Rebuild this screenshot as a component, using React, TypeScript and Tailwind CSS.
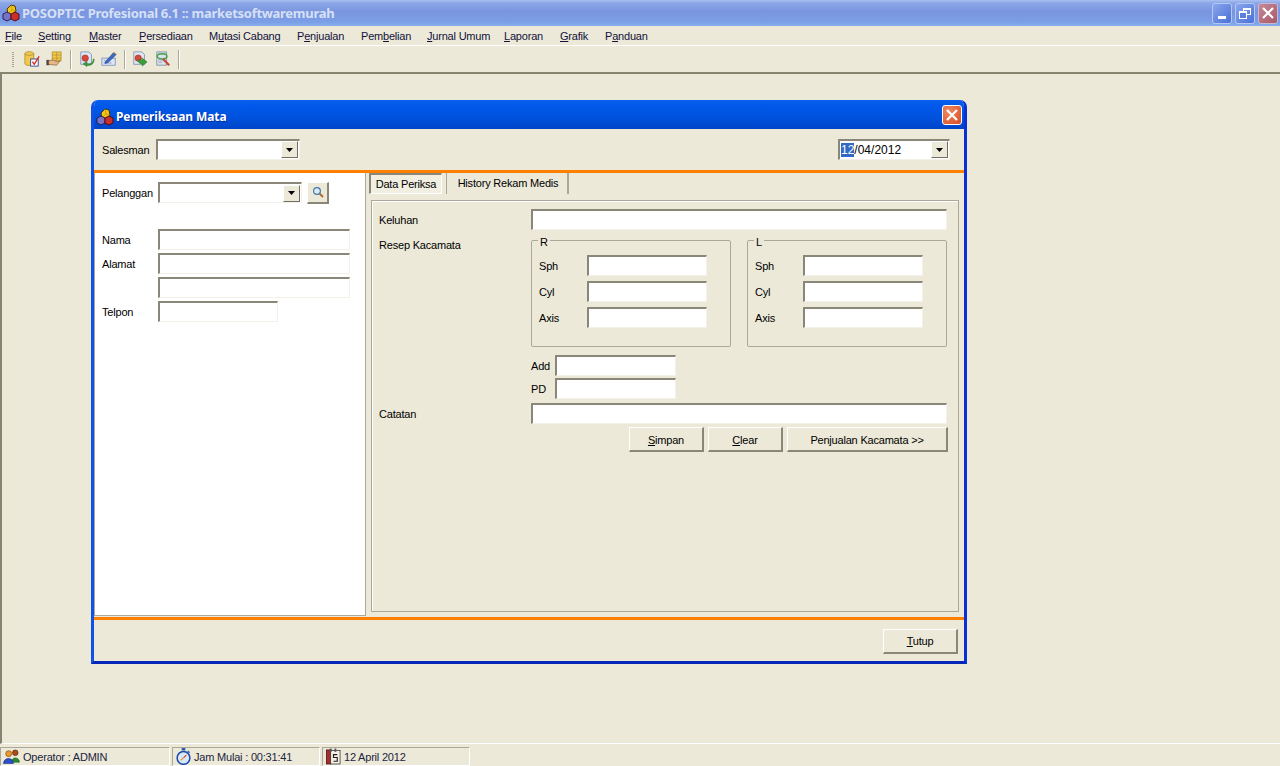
import type { ReactNode } from 'react'

const sunken = 'border-t-2 border-l-2 border-r border-b border-t-[#8a8778] border-l-[#8a8778] border-r-[#f4f2e8] border-b-[#f4f2e8] bg-white'

const menus: [string, string, string, string][] = [
    ['', 'F', 'ile', 'w-[33px]'],
    ['', 'S', 'etting', 'w-[51px]'],
    ['', 'M', 'aster', 'w-[50px]'],
    ['', 'P', 'ersediaan', 'w-[70px]'],
    ['M', 'u', 'tasi Cabang', 'w-[88px]'],
    ['P', 'e', 'njualan', 'w-[64px]'],
    ['Pem', 'b', 'elian', 'w-[66px]'],
    ['', 'J', 'urnal Umum', 'w-[77px]'],
    ['', 'L', 'aporan', 'w-[56px]'],
    ['', 'G', 'rafik', 'w-[45px]'],
    ['P', 'a', 'nduan', 'w-[50px]'],
]

const Logo = () => (
    <svg width="18" height="18" viewBox="0 0 18 18">
        <path d="M5 5 L9 1 L13 2 L14 7 L10 11 L6 10 Z" fill="#f5c518" stroke="#3c2c00" strokeWidth="0.9" />
        <path d="M9 1 L10 6 L14 7 M10 6 L6 10" fill="none" stroke="#b08a10" strokeWidth="0.6" />
        <path d="M1 10 L5 8 L9 10 L9 15 L5 17 L1 15 Z" fill="#7a72c4" stroke="#1c1850" strokeWidth="0.9" />
        <path d="M9 10 L13 8 L17 10 L17 15 L13 17 L9 15 Z" fill="#c8302c" stroke="#4c0808" strokeWidth="0.9" />
    </svg>
)

const Db = () => (
    <svg width="16" height="16" viewBox="0 0 18 18">
        <path d="M1 3 C1 0 11 0 11 3 L11 14 C11 17 1 17 1 14 Z" fill="#f0c850" stroke="#a88420" strokeWidth="0.8" />
        <path d="M1 3 C1 5.5 11 5.5 11 3" fill="none" stroke="#a88420" strokeWidth="0.8" />
        <rect x="7.5" y="9" width="8.5" height="8" fill="#fff" stroke="#30408c" />
        <path d="M9.5 12 L11.5 15 L17 6" fill="none" stroke="#d02828" strokeWidth="1.5" />
    </svg>
)

const DbHand = () => (
    <svg width="16" height="16" viewBox="0 0 18 18">
        <path d="M7 1 H17 V11 H7 Z" fill="#f0c850" stroke="#b08a20" strokeWidth="0.8" />
        <path d="M7 4.5 H17 M7 8 H17 M12 1 V11" stroke="#b08a20" strokeWidth="0.7" />
        <rect x="0.5" y="10" width="3" height="6" fill="#444" />
        <path d="M3 11 L8 10 L12 12 L16 11 L12 16 L3 15 Z" fill="#e8b888" stroke="#80502c" strokeWidth="0.7" />
    </svg>
)

const DocArrow = ({ dir }: { dir: 'left' | 'right' }) => (
    <svg width="16" height="16" viewBox="0 0 18 18">
        <path d="M2 1 H11 L14 4 V15 H2 Z" fill="#dfe6f4" stroke="#6c7fa8" strokeWidth="0.8" />
        <circle cx="7" cy="8" r="3.6" fill="#d84838" stroke="#902818" strokeWidth="0.6" />
        {dir === 'left'
            ? <path d="M16 9 C16 14 12 15 9 14 L9 11.5 L4.5 14.5 L9 17.5 L9 16 C13 17 17 15 17 9 Z" fill="#3c9c3c" stroke="#1c6c1c" strokeWidth="0.5" />
            : <path d="M6 10 C9 10 11 10 11.5 10.5 L11.5 8 L17 12.5 L11.5 17 L11.5 14.5 C9 14.5 7 13 6 10 Z" fill="#3c9c3c" stroke="#1c6c1c" strokeWidth="0.5" />}
    </svg>
)

const Pencil = () => (
    <svg width="16" height="16" viewBox="0 0 18 18">
        <rect x="1" y="8" width="15" height="8" fill="#dce6f6" stroke="#6c7fa8" strokeWidth="0.8" />
        <path d="M3 11 H8 M3 13.5 H12" stroke="#7c90c0" strokeWidth="0.8" />
        <path d="M5 12 L14 2 L17 4 L8 13 L4.5 14 Z" fill="#3c6cc8" stroke="#1c3c80" strokeWidth="0.7" />
        <path d="M14 2 L15 1 L17.5 3 L17 4 Z" fill="#e0a030" />
    </svg>
)

const DocTool = () => (
    <svg width="16" height="16" viewBox="0 0 18 18">
        <path d="M2 1 H13 V16 H2 Z" fill="#d8e0ec" stroke="#6c7f98" strokeWidth="0.8" />
        <ellipse cx="8" cy="6" rx="5.5" ry="3" fill="none" stroke="#48a048" strokeWidth="1.6" />
        <path d="M4 10 H10 M4 12.5 H8" stroke="#8090a8" strokeWidth="0.8" />
        <path d="M9 9 L16 16" stroke="#c84838" strokeWidth="2.4" />
    </svg>
)

const People = () => (
    <svg width="17" height="15" viewBox="0 0 18 16">
        <circle cx="13" cy="4" r="3" fill="#b04818" stroke="#402000" strokeWidth="0.6" />
        <path d="M9 14 C9 8 17 8 17.5 14 Z" fill="#2c8c2c" stroke="#145014" strokeWidth="0.6" />
        <circle cx="6" cy="5" r="3.2" fill="#e89830" stroke="#704008" strokeWidth="0.6" />
        <path d="M0.5 15.5 C0.5 8.5 11 8.5 11 15.5 Z" fill="#2c50c8" stroke="#142878" strokeWidth="0.6" />
    </svg>
)

const Stopwatch = () => (
    <svg width="15" height="17" viewBox="0 0 16 18">
        <rect x="6" y="0" width="4" height="2.5" fill="#2858b0" />
        <path d="M12.5 3 L14.5 5" stroke="#2858b0" strokeWidth="1.4" />
        <circle cx="8" cy="10.5" r="6.8" fill="#d8e8f8" stroke="#1c48a8" strokeWidth="1.6" />
        <path d="M8 10.5 L11 7.5" stroke="#d04020" strokeWidth="1.2" />
        <path d="M8 10.5 L5 13" stroke="#e89020" strokeWidth="1.2" />
    </svg>
)

const Calendar = () => (
    <svg width="15" height="17" viewBox="0 0 16 18">
        <rect x="0.5" y="2" width="5" height="15" fill="#a82c2c" stroke="#401010" strokeWidth="0.8" />
        <rect x="5" y="2.5" width="10" height="14.5" fill="#f4f0e4" stroke="#303030" strokeWidth="0.8" />
        <rect x="4" y="0.5" width="2" height="3.5" fill="#555" />
        <rect x="9" y="0.5" width="2" height="3.5" fill="#555" />
        <path d="M12 7 H8 V10 H12 V14 H8" fill="none" stroke="#202020" strokeWidth="1.2" />
    </svg>
)

const Arrow = () => (
    <svg width="7" height="4" viewBox="0 0 7 4"><path d="M0 0 H7 L3.5 4 Z" fill="#000" /></svg>
)

const Field = ({ className, children }: { className: string; children?: ReactNode }) => (
    <div className={`h-[21px] shrink-0 ${sunken} ${className}`}>{children}</div>
)

const Combo = ({ className, children }: { className: string; children?: ReactNode }) => (
    <div className={`h-[21px] shrink-0 flex items-center justify-between ${sunken} ${className}`}>
        <span className="pl-px leading-none">{children}</span>
        <div className="w-[17px] h-[17px] mr-px flex items-center justify-center bg-[#ece9d8] border border-t-white border-l-white border-r-[#716f64] border-b-[#716f64]">
            <Arrow />
        </div>
    </div>
)

const Button = ({ className, children }: { className: string; children: ReactNode }) => (
    <div className={`h-[25px] shrink-0 flex items-center justify-center pt-[2px] bg-[#ece9d8] border-t border-l border-r-2 border-b-2 border-t-white border-l-white border-r-[#8a8778] border-b-[#8a8778] ${className}`}>
        {children}
    </div>
)

const Sep = ({ className }: { className: string }) => (
    <div className={`w-px h-[19px] bg-[#aca899] shadow-[1px_0_0_#fff] ${className}`} />
)

const LensRow = ({ label }: { label: string }) => (
    <div className="flex items-center h-[21px]">
        <span className="w-[48px] pt-[2px]">{label}</span>
        <Field className="w-[120px]" />
    </div>
)

const Lens = ({ title }: { title: string }) => (
    <div className="relative w-[200px] h-[107px] border border-[#aca899] rounded-[2px] pl-[7px] pt-[14px] flex flex-col gap-[5px]">
        <span className="absolute left-[6px] top-[-5px] px-[2px] bg-[#ece9d8] leading-[12px]">{title}</span>
        <LensRow label="Sph" />
        <LensRow label="Cyl" />
        <LensRow label="Axis" />
    </div>
)

const Panel = ({ className, icon, text }: { className: string; icon: ReactNode; text: string }) => (
    <div className={`h-[19px] flex items-center gap-[3px] border border-t-[#aca899] border-l-[#aca899] border-r-white border-b-white ${className}`}>
        {icon}
        <span className="text-[#1c2440] pt-[2px]">{text}</span>
    </div>
)

export default function App() {
    return (
        <div className="w-[1280px] h-[766px] overflow-hidden flex flex-col bg-[#ece9d8] text-black text-[11px] tracking-[-0.2px] font-['Liberation_Sans',sans-serif]">
            <div className="h-[26px] shrink-0 flex items-center justify-between pl-[2px] pr-[2px] bg-[linear-gradient(180deg,#a9c0f0_0%,#8ba6e6_12%,#7a95df_45%,#7b9fe6_85%,#88aeee_100%)]">
                <div className="flex items-center gap-[2px]">
                    <Logo />
                    <span className="pt-[2px] text-[13px] font-['Noto_Sans',sans-serif] font-bold text-[#d6e0f6] tracking-[-0.28px]">POSOPTIC Profesional 6.1 :: marketsoftwaremurah</span>
                </div>
                <div className="flex items-center gap-[3px]">
                    <div className="w-[20px] h-[21px] rounded-[3px] border border-[#b4c8f4] bg-[linear-gradient(135deg,#8aa6ec,#4a70d8)] flex items-end pl-[5px] pb-[4px]">
                        <div className="w-[8px] h-[3px] bg-white" />
                    </div>
                    <div className="relative w-[20px] h-[21px] rounded-[3px] border border-[#b4c8f4] bg-[linear-gradient(135deg,#8aa6ec,#4a70d8)]">
                        <div className="absolute left-[7px] top-[4px] w-[8px] h-[7px] border border-t-2 border-white" />
                        <div className="absolute left-[3px] top-[7px] w-[8px] h-[8px] border border-t-2 border-white bg-[#5c80de]" />
                    </div>
                    <div className="w-[20px] h-[21px] rounded-[3px] border border-[#c8b8d0] bg-[linear-gradient(135deg,#c48a98,#a85868)] flex items-center justify-center">
                        <svg width="12" height="12" viewBox="0 0 12 12"><path d="M1 1 L11 11 M11 1 L1 11" stroke="#fff" strokeWidth="2.2" /></svg>
                    </div>
                </div>
            </div>

            <div className="h-[20px] shrink-0 flex items-center pl-[5px] pt-px border-b border-white text-[#12123c]">
                {menus.map(([a, u, b, w]) => (
                    <span key={a + u + b} className={w}>{a}<u>{u}</u>{b}</span>
                ))}
            </div>

            <div className="h-[26px] shrink-0 flex items-center pl-[12px]">
                <div className="w-[2px] h-[15px] mr-[10px] bg-[repeating-linear-gradient(180deg,#a8a490_0,#a8a490_1px,transparent_1px,transparent_2px)]" />
                <div className="flex items-center gap-[6px]">
                    <Db />
                    <DbHand />
                </div>
                <Sep className="mx-[8px]" />
                <div className="flex items-center gap-[6px]">
                    <DocArrow dir="left" />
                    <Pencil />
                </div>
                <Sep className="mx-[7px]" />
                <div className="flex items-center gap-[7px]">
                    <DocArrow dir="right" />
                    <DocTool />
                </div>
                <Sep className="ml-[7px]" />
            </div>

            <div className="relative flex-1 border-t-2 border-l-2 border-t-[#86836f] border-l-[#86836f] border-b border-b-white">
                <div className="absolute left-[89px] top-[26px] w-[876px] h-[564px] flex flex-col rounded-t-[7px] overflow-hidden bg-[#ece9d8] border-l-[3px] border-r-[3px] border-b-[3px] border-l-[#0f52e8] border-r-[#0831d9] border-b-[#0526b8]">
                    <div className="h-[29px] -mx-[3px] shrink-0 flex items-center justify-between pl-[5px] pr-[5px] bg-[linear-gradient(180deg,#0a5fee_0%,#0058ea_20%,#0052de_60%,#0044c8_100%)]">
                        <div className="flex items-center gap-[2px] pt-[4px]">
                            <Logo />
                            <span className="text-[12px] font-bold text-white font-['Noto_Sans',sans-serif] tracking-[-0.1px] [text-shadow:1px_1px_0_#0030a0]">Pemeriksaan Mata</span>
                        </div>
                        <div className="w-[20px] h-[20px] rounded-[3px] border border-white bg-[radial-gradient(circle_at_30%_30%,#ee8a60,#d84c24)] flex items-center justify-center">
                            <svg width="12" height="12" viewBox="0 0 12 12"><path d="M1 1 L11 11 M11 1 L1 11" stroke="#fff" strokeWidth="2.2" /></svg>
                        </div>
                    </div>

                    <div className="h-[41px] shrink-0 flex items-center justify-between pl-[8px] pr-[14px] pb-[1px]">
                        <div className="flex items-center">
                            <span className="w-[54px] pt-[2px]">Salesman</span>
                            <Combo className="w-[144px]" />
                        </div>
                        <Combo className="w-[112px] text-[12px] tracking-[0px]">
                            <span className="bg-[#316ac5] text-white">12</span>/04/2012
                        </Combo>
                    </div>

                    <div className="h-[3px] shrink-0 bg-[#ff8000]" />

                    <div className="flex-1 flex min-h-0">
                        <div className="w-[272px] h-[443px] shrink-0 bg-white border-r border-b border-l border-[#aca899] pl-[7px] pt-[9px]">
                            <div className="flex items-center h-[21px]">
                                <span className="w-[56px] pt-[2px]">Pelanggan</span>
                                <Combo className="w-[144px]" />
                                <div className="ml-[5px] w-[22px] h-[22px] flex items-center justify-center bg-[#ece9d8] border-t border-l border-r-2 border-b-2 border-t-white border-l-white border-r-[#8a8778] border-b-[#8a8778]">
                                    <svg width="12" height="12" viewBox="0 0 12 12">
                                        <circle cx="5" cy="5" r="3.4" fill="#d8ecf8" stroke="#4878a8" strokeWidth="1.2" />
                                        <path d="M7.5 7.5 L11 11" stroke="#a86c30" strokeWidth="1.8" />
                                    </svg>
                                </div>
                            </div>
                            <div className="mt-[26px] flex flex-col gap-[3px]">
                                <div className="flex items-center h-[21px]">
                                    <span className="w-[56px] pt-[2px]">Nama</span>
                                    <Field className="w-[192px]" />
                                </div>
                                <div className="flex items-center h-[21px]">
                                    <span className="w-[56px] pt-[2px]">Alamat</span>
                                    <Field className="w-[192px]" />
                                </div>
                                <div className="flex items-center h-[21px] pl-[56px]">
                                    <Field className="w-[192px]" />
                                </div>
                                <div className="flex items-center h-[21px]">
                                    <span className="w-[56px] pt-[2px]">Telpon</span>
                                    <Field className="w-[120px]" />
                                </div>
                            </div>
                        </div>

                        <div className="flex-1 flex flex-col pl-[5px]">
                            <div className="h-[27px] shrink-0 flex items-start">
                                <div className="-ml-[2px] w-[73px] h-[21px] flex items-center justify-center bg-[#f1efe2] border-t-2 border-l-2 border-r border-b border-t-[#8a8778] border-l-[#8a8778] border-r-white border-b-white">Data Periksa</div>
                                <div className="ml-[4px] w-[123px] h-[21px] flex items-center justify-center pl-[2px] border-l border-r-2 border-l-[#aca899] border-r-[#aca899]">History Rekam Medis</div>
                            </div>
                            <div className="w-[588px] h-[412px] shrink-0 border border-[#aca899] shadow-[inset_1px_1px_0_#fff] pl-[7px] pt-[8px]">
                                <div className="flex items-center h-[21px]">
                                    <span className="w-[152px] pt-[2px]">Keluhan</span>
                                    <Field className="w-[416px]" />
                                </div>
                                <div className="flex mt-[10px]">
                                    <span className="w-[152px] leading-[11px]">Resep Kacamata</span>
                                    <div className="flex gap-[16px]">
                                        <Lens title="R" />
                                        <Lens title="L" />
                                    </div>
                                </div>
                                <div className="flex items-center h-[21px] mt-[8px] pl-[152px]">
                                    <span className="w-[24px] pt-[2px]">Add</span>
                                    <Field className="w-[121px]" />
                                </div>
                                <div className="flex items-center h-[21px] mt-[2px] pl-[152px]">
                                    <span className="w-[24px] pt-[2px]">PD</span>
                                    <Field className="w-[121px]" />
                                </div>
                                <div className="flex items-center h-[21px] mt-[4px]">
                                    <span className="w-[152px] pt-[2px]">Catatan</span>
                                    <Field className="w-[416px]" />
                                </div>
                                <div className="flex gap-[4px] mt-[3px] pl-[250px]">
                                    <Button className="w-[75px]"><span><u>S</u>impan</span></Button>
                                    <Button className="w-[75px]"><span><u>C</u>lear</span></Button>
                                    <Button className="w-[161px]">Penjualan Kacamata &gt;&gt;</Button>
                                </div>
                            </div>
                        </div>
                    </div>

                    <div className="h-[3px] shrink-0 bg-[#ff8000]" />

                    <div className="h-[41px] shrink-0 flex items-center justify-end pr-[6px] pt-[1px]">
                        <Button className="w-[75px]"><span><u>T</u>utup</span></Button>
                    </div>
                </div>
            </div>

            <div className="h-[22px] shrink-0 flex items-end gap-[2px]">
                <Panel className="w-[170px] pl-[2px]" icon={<People />} text="Operator : ADMIN" />
                <Panel className="w-[148px] pl-[3px]" icon={<Stopwatch />} text="Jam Mulai : 00:31:41" />
                <Panel className="w-[148px] pl-[3px]" icon={<Calendar />} text="12 April 2012" />
            </div>
        </div>
    )
}
